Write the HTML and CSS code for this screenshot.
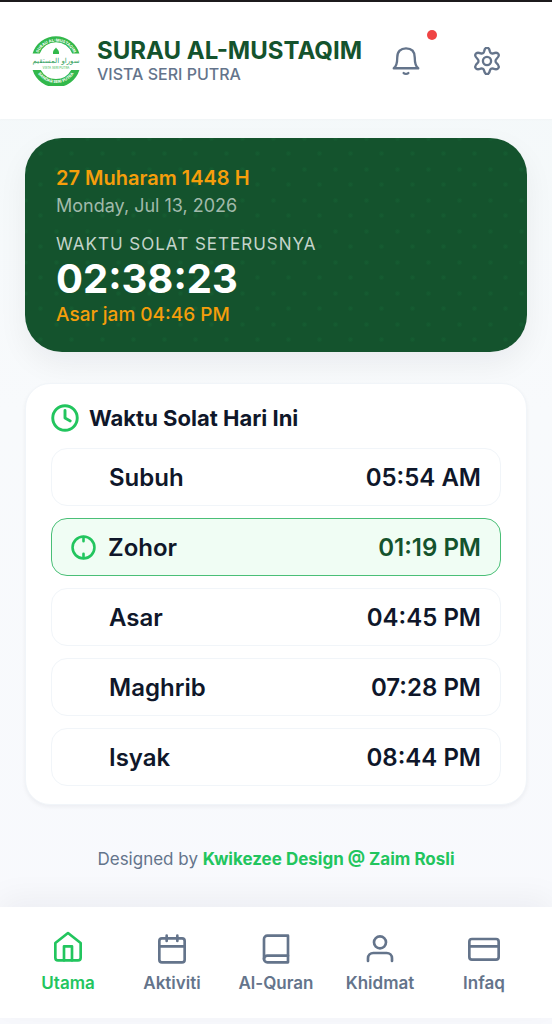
FILE: index.html
```html
<!DOCTYPE html>
<html lang="ms">
<head>
    <meta charset="UTF-8">
    <meta name="viewport" content="width=device-width, initial-scale=1.0">
    <title>Surau Al-Mustaqim</title>
    <link rel="stylesheet" href="styles.css">
</head>
<body>
    <header class="header">
        <svg class="logo" viewBox="0 0 50 50" role="img" aria-label="Logo Surau Al-Mustaqim">
            <defs>
                <path id="arcTop" d="M5.500 25a19.500 19.500 0 0 1 39 0"/>
                <path id="arcBottom" d="M3 25a22 22 0 0 0 44 0"/>
            </defs>
            <path class="logo-band" d="M1.600 17.500a24.500 24.500 0 0 1 46.800 0h-7.200a17.300 17.300 0 0 0-32.400 0z"/>
            <path class="logo-band" d="M1.600 34a24.500 24.500 0 0 0 46.800 0h-8.200a17.300 17.300 0 0 1-30.400 0z"/>
            <path class="logo-band" d="M25 11.500c.5 1.500 3 2.200 3 4.800v1.700h-6v-1.700c0-2.600 2.500-3.300 3-4.800z"/>
            <text class="logo-ring"><textPath href="#arcTop" startOffset="50%">SURAU AL-MUSTAQIM</textPath></text>
            <text class="logo-ring"><textPath href="#arcBottom" startOffset="50%">BANDAR SERI PUTRA</textPath></text>
            <text class="logo-arabic" x="25" y="27">سوراو المستقيم</text>
            <text class="logo-small" x="25" y="33">VISTA SERI PUTRA</text>
        </svg>
        <div class="brand">
            <h1>SURAU AL-MUSTAQIM</h1>
            <p>VISTA SERI PUTRA</p>
        </div>
        <div class="actions">
            <button class="icon-button" type="button" aria-label="Notifikasi">
                <svg class="icon" viewBox="0 0 24 24"><path d="M1.500 18.200c2.200-1.500 3-4 3-9.200C4.500 3.800 7.500 1.200 12 1.200S19.500 3.800 19.500 9c0 5.200.8 7.700 3 9.200z"/><path d="M10 22.300c1 .9 3 .9 4 0"/></svg>
                <span class="badge"></span>
            </button>
            <button class="icon-button" type="button" aria-label="Tetapan">
                <svg class="icon" viewBox="0 0 24 24"><circle cx="12" cy="12" r="3.500"/><path d="M9.500 3.800C9.900 1.600 10.600.6 12 .6s2.100 1 2.500 3.200c.3 1.400 1.500 2.100 2.900 1.600 2.100-.8 3.700-.6 4.400.6s.1 2.700-1.600 4.100c-1.200 1-1.200 2.800 0 3.800 1.700 1.400 2.300 2.900 1.600 4.100s-2.300 1.400-4.400.6c-1.400-.5-2.600.2-2.900 1.600-.4 2.200-1.100 3.200-2.500 3.200s-2.100-1-2.500-3.200c-.3-1.400-1.500-2.100-2.900-1.600-2.100.8-3.700.6-4.400-.6s-.1-2.700 1.600-4.100c1.200-1 1.200-2.800 0-3.800C2.100 8.700 1.500 7.200 2.200 6s2.300-1.400 4.400-.6c1.400.5 2.600-.2 2.900-1.600z"/></svg>
            </button>
        </div>
    </header>

    <main class="content">
        <section class="next-card">
            <p class="hijri">27 Muharam 1448 H</p>
            <p class="date">Monday, Jul 13, 2026</p>
            <p class="next-label">WAKTU SOLAT SETERUSNYA</p>
            <p class="countdown">02:38:23</p>
            <p class="next-time">Asar jam 04:46 PM</p>
        </section>

        <section class="times-card">
            <h2>
                <svg class="icon" viewBox="0 0 24 24"><circle cx="12" cy="12" r="10.500"/><path d="M12 5.500V12l4.500 2.500"/></svg>
                Waktu Solat Hari Ini
            </h2>
            <ul class="times">
                <li><span class="name">Subuh</span><span>05:54 AM</span></li>
                <li class="active">
                    <svg class="icon" viewBox="0 0 24 24"><circle cx="12" cy="12" r="10.500"/><path d="M12 2v4M12 18v4"/></svg>
                    <span class="name">Zohor</span><span>01:19 PM</span>
                </li>
                <li><span class="name">Asar</span><span>04:45 PM</span></li>
                <li><span class="name">Maghrib</span><span>07:28 PM</span></li>
                <li><span class="name">Isyak</span><span>08:44 PM</span></li>
            </ul>
        </section>

        <p class="credit">Designed by <a href="#">Kwikezee Design @ Zaim Rosli</a></p>
    </main>

    <nav class="bottom-nav">
        <a class="current" href="#">
            <svg class="icon" viewBox="0 0 24 24"><path d="M2.500 9L12 1.500 21.500 9v11a2 2 0 0 1-2 2h-15a2 2 0 0 1-2-2z"/><path d="M9 22V11.500h6V22"/></svg>
            Utama
        </a>
        <a href="#">
            <svg class="icon" viewBox="0 0 24 24"><rect x="2.500" y="4" width="19" height="18" rx="2"/><path d="M16 2v4M8 2v4M3 10h18"/></svg>
            Aktiviti
        </a>
        <a href="#">
            <svg class="icon" viewBox="0 0 24 24"><path d="M3 19.500A2.500 2.500 0 0 1 5.500 17H21"/><path d="M5.500 2H21v20H5.500A2.500 2.500 0 0 1 3 19.500v-15A2.500 2.500 0 0 1 5.500 2z"/></svg>
            Al-Quran
        </a>
        <a href="#">
            <svg class="icon" viewBox="0 0 24 24"><path d="M21 21v-2a4 4 0 0 0-4-4H7a4 4 0 0 0-4 4v2"/><circle cx="12" cy="7" r="4.500"/></svg>
            Khidmat
        </a>
        <a href="#">
            <svg class="icon" viewBox="0 0 24 24"><rect x="1" y="4.500" width="22" height="15.500" rx="2"/><path d="M1 10h22"/></svg>
            Infaq
        </a>
    </nav>
</body>
</html>
```
FILE: styles.css
```css
* {
    box-sizing: border-box;
}

body {
    display: flex;
    flex-direction: column;
    min-height: 100vh;
    margin: 0;
    padding-bottom: 6px;
    border-top: 2px solid #1c1a1c;
    font-family: Inter, sans-serif;
    color: #0f172a;
    background: linear-gradient(#f3f8f9, #f8fafc 40%, #f8f9fd);
}

h1, h2, p, ul {
    margin: 0;
    padding: 0;
}

a {
    text-decoration: none;
}

.icon {
    flex: none;
    width: 28px;
    height: 28px;
    fill: none;
    stroke: currentColor;
    stroke-width: 2;
    stroke-linecap: round;
    stroke-linejoin: round;
}

/* header */
.header {
    display: flex;
    align-items: center;
    height: 117px;
    padding: 0 34px 0 31px;
    background-color: #fff;
    box-shadow: 0 1px 2px rgba(15, 23, 42, 0.02);
}

.logo {
    flex: none;
    width: 50px;
    height: 50px;
}

.logo-band {
    fill: #32b84b;
}

.logo text {
    text-anchor: middle;
}

.logo-ring {
    font-size: 4px;
    font-weight: 700;
    fill: #fff;
}

.logo-arabic {
    font-family: "DejaVu Sans", sans-serif;
    font-size: 7px;
    fill: #2f9e5b;
}

.logo-small {
    font-size: 3px;
    fill: #32b84b;
}

.brand {
    margin-left: 16px;
    white-space: nowrap;
}

.brand h1 {
    font-size: 24px;
    line-height: 26px;
    font-weight: 700;
    color: #14532d;
}

.brand p {
    font-size: 16px;
    line-height: 20px;
    font-weight: 500;
    color: #64748b;
}

.actions {
    display: flex;
    gap: 19px;
    margin-left: auto;
}

.icon-button {
    position: relative;
    display: flex;
    align-items: center;
    justify-content: center;
    width: 62px;
    height: 62px;
    padding: 0;
    border: none;
    background: none;
    color: #64748b;
    cursor: pointer;
}

.badge {
    position: absolute;
    top: 0;
    right: 0;
    width: 10px;
    height: 10px;
    border-radius: 50%;
    background-color: #ef4444;
}

/* main */
.content {
    flex: 1;
    padding: 19px 25px;
}

.next-card {
    padding: 26px 31px 24px;
    border-radius: 37px;
    background-color: #14532d;
    background-image:
        radial-gradient(circle at 50% 50%, rgba(34, 197, 94, 0.07) 1px, transparent 3px),
        radial-gradient(circle at 50% 50%, rgba(34, 197, 94, 0.07) 1px, transparent 3px);
    background-size: 31px 31px;
    background-position: 0 0, 16px 16px;
    box-shadow: 0 12px 30px rgba(15, 23, 42, 0.06);
    color: #fff;
}

.hijri {
    font-size: 20px;
    line-height: 28px;
    font-weight: 600;
    color: #f59e0b;
}

.date {
    font-size: 18px;
    line-height: 28px;
    color: #a1baab;
}

.next-label {
    margin-top: 12px;
    font-size: 17px;
    line-height: 24px;
    letter-spacing: 1px;
    color: #c4d4ca;
}

.countdown {
    font-size: 40px;
    line-height: 46px;
    font-weight: 700;
}

.next-time {
    font-size: 19px;
    line-height: 26px;
    font-weight: 500;
    color: #f59e0b;
}

.times-card {
    margin-top: 31px;
    padding: 18px 25px;
    border: 1px solid #f1f5f9;
    border-radius: 25px;
    background-color: #fff;
    box-shadow: 0 2px 4px rgba(15, 23, 42, 0.05);
}

.times-card h2 {
    display: flex;
    align-items: center;
    gap: 10px;
    margin-bottom: 14px;
    font-size: 22px;
    line-height: 32px;
    font-weight: 700;
}

.times-card .icon {
    stroke-width: 2.5;
    color: #22c55e;
}

.times {
    display: grid;
    gap: 12px;
    list-style: none;
}

.times li {
    display: flex;
    align-items: center;
    height: 58px;
    padding: 0 19px 0 57px;
    border: 1px solid #f1f5f9;
    border-radius: 16px;
    font-size: 24px;
    font-weight: 600;
}

.times .active {
    gap: 12px;
    padding-left: 19px;
    border-color: #4abf77;
    background-color: #f0fdf4;
    color: #14532d;
}

.times .active .icon {
    width: 25px;
    height: 25px;
}

.times .name {
    margin-right: auto;
    color: #0f172a;
}

.credit {
    margin-top: 42px;
    font-size: 17px;
    line-height: 24px;
    text-align: center;
    color: #64748b;
}

.credit a {
    font-weight: 700;
    color: #22c55e;
}

/* bottom menu */
.bottom-nav {
    display: grid;
    grid-template-columns: repeat(5, 1fr);
    height: 111px;
    padding: 26px 16px 0;
    background-color: #fff;
    box-shadow: 0 -8px 30px rgba(15, 23, 42, 0.05);
}

.bottom-nav a {
    display: flex;
    flex-direction: column;
    align-items: center;
    gap: 8px;
    font-size: 17px;
    line-height: 20px;
    font-weight: 600;
    color: #64748b;
}

.bottom-nav .icon {
    width: 32px;
    height: 32px;
}

.bottom-nav .current {
    color: #22c55e;
}

.bottom-nav .current .icon {
    margin-top: -2px;
    margin-bottom: 2px;
}
```
